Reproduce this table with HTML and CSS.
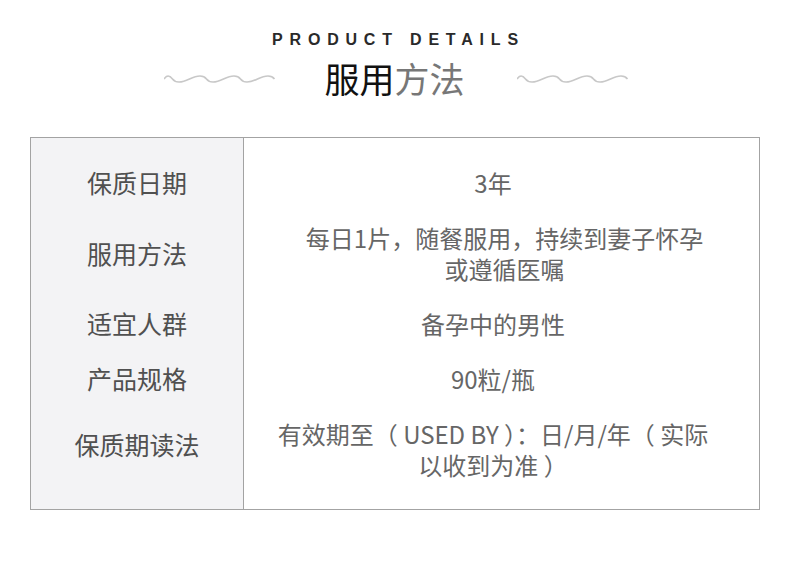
FILE: index.html
```html
<!DOCTYPE html>
<html lang="zh-CN">

<head>
    <meta charset="UTF-8">
    <meta name="viewport" content="width=device-width, initial-scale=1.0">
    <title>服用方法</title>
    <link rel="stylesheet" href="styles.css">
</head>

<body>
    <header class="title-block">
        <p class="eyebrow">PRODUCT DETAILS</p>
        <div class="title-row">
            <svg class="wave" width="112" height="10" viewBox="0 0 112 10">
                <path d="M0 6 q4 -6 8.5 0 t17 0 t17 0 t17 0 t17 0 t17 0 t17 0" />
            </svg>
            <h1><span class="strong">服用</span><span class="light">方法</span></h1>
            <svg class="wave" width="112" height="10" viewBox="0 0 112 10">
                <path d="M0 6 q4 -6 8.5 0 t17 0 t17 0 t17 0 t17 0 t17 0 t17 0" />
            </svg>
        </div>
    </header>

    <main>
        <table class="spec">
            <tr>
                <th>保质日期</th>
                <td>3年</td>
            </tr>
            <tr>
                <th>服用方法</th>
                <td class="shift">每日1片，随餐服用，持续到妻子怀孕<br>或遵循医嘱</td>
            </tr>
            <tr>
                <th>适宜人群</th>
                <td>备孕中的男性</td>
            </tr>
            <tr>
                <th>产品规格</th>
                <td>90粒/瓶</td>
            </tr>
            <tr>
                <th>保质期读法</th>
                <td>有效期至（ USED BY ）：日/月/年（ 实际<br>以收到为准 ）</td>
            </tr>
        </table>
    </main>
</body>

</html>
```

FILE: styles.css
```css
body {
    margin: 0;
    background-color: #fff;
    font-family: "Noto Sans CJK SC", "Noto Sans", sans-serif;
}

.title-block {
    text-align: center;
    padding-top: 28px;
}

.eyebrow {
    margin: 0 0 0 7px;
    font-family: "Liberation Sans", Arial, sans-serif;
    font-weight: bold;
    font-size: 16px;
    line-height: 24px;
    letter-spacing: 6.8px;
    color: #2a2a2a;
}

.title-row {
    display: flex;
    justify-content: center;
    align-items: center;
    gap: 48px;
    margin-top: 2px;
    margin-left: 3px;
}

.title-row h1 {
    margin-right: 4px;
}

.wave path {
    fill: none;
    stroke: #c8c8c8;
    stroke-width: 1.6;
}

h1 {
    margin: 0;
    font-size: 35px;
    font-weight: normal;
    line-height: 48px;
}

h1 .strong {
    color: #111;
}

h1 .light {
    color: #777;
}

main {
    padding: 0 30px;
    margin-top: 35px;
}

.spec {
    width: 730px;
    border-collapse: collapse;
    border: 1px solid #a3a3a3;
    font-size: 24px;
    line-height: 31px;
}

.spec th,
.spec td {
    padding: 12px 0;
    text-align: center;
    font-weight: normal;
}

.spec th {
    width: 212px;
    background-color: #f3f3f5;
    border-right: 1px solid #a3a3a3;
    color: #505050;
    font-size: 25px;
}

.spec td {
    padding-right: 17px;
    color: #666;
}

.spec td.shift {
    padding-left: 6px;
    padding-right: 0;
}

.spec tr:first-child th,
.spec tr:first-child td {
    padding-top: 29px;
}

.spec tr:last-child td {
    padding-bottom: 29px;
}

.spec tr:last-child th {
    padding-bottom: 39px;
}
```
